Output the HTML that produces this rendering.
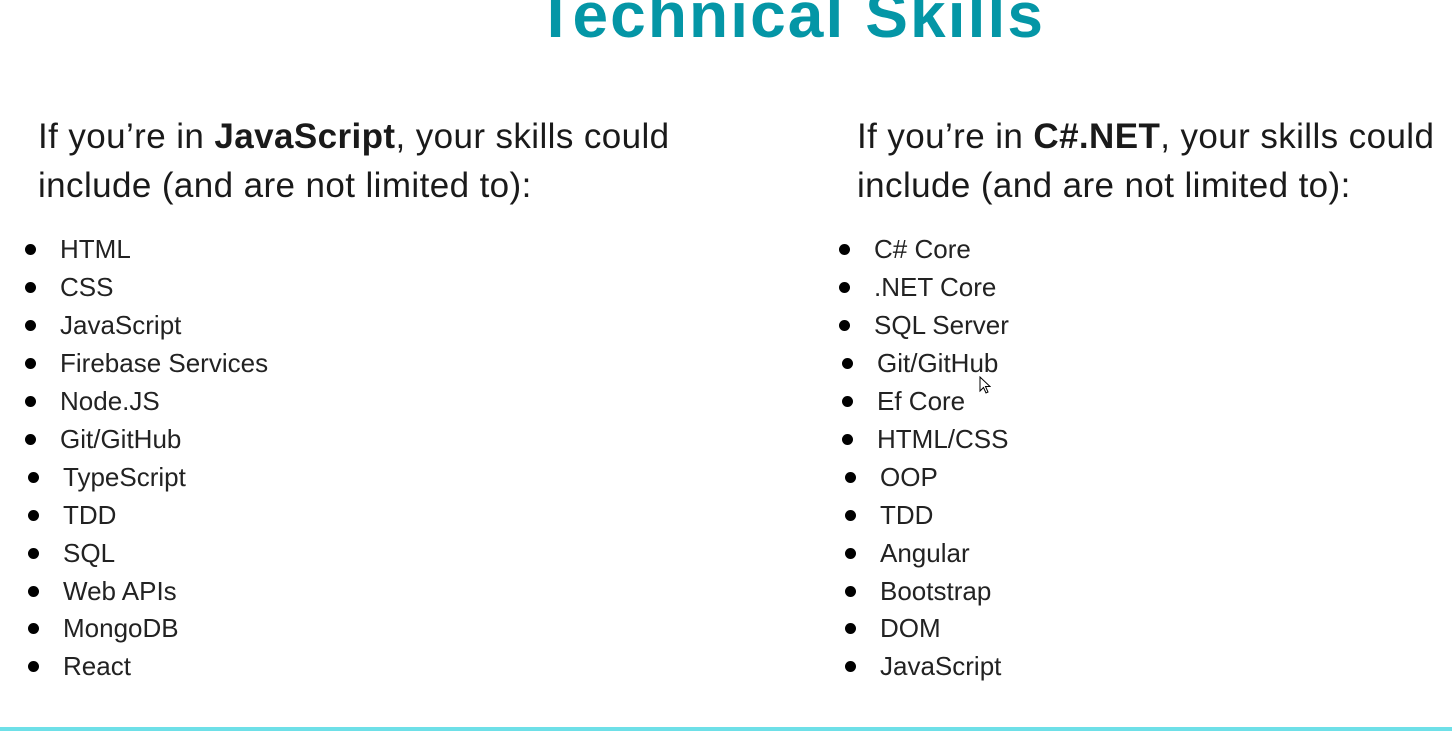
<!DOCTYPE html>
<html><head><style>
body{margin:0;width:1452px;height:731px;background:#fff;position:relative;overflow:hidden;font-family:"Liberation Sans",sans-serif;color:#111}
.t{position:absolute;left:536px;top:-22px;font-size:64px;font-weight:bold;color:#0496a6;letter-spacing:2.1px;white-space:nowrap}
.p{position:absolute;font-size:35px;line-height:49px;letter-spacing:0.4px;white-space:nowrap;color:#1a1a1a}
.i{position:absolute;font-size:26px;line-height:30px;white-space:nowrap;color:#222}
.b{position:absolute;width:11px;height:11px;border-radius:50%;background:#000}
.line{position:absolute;left:0;top:727px;width:1452px;height:4px;background:#6ee0e8}
</style></head><body>
<div class="t">Technical Skills</div>
<div class="p" style="left:38px;top:112px">If you’re in <b>JavaScript</b>, your skills could<br>include (and are not limited to):</div>
<div class="p" style="left:857px;top:112px">If you’re in <b>C#.NET</b>, your skills could<br>include (and are not limited to):</div>

<div class="b" style="left:25px;top:244px"></div><div class="i" style="left:60px;top:234px">HTML</div>
<div class="b" style="left:25px;top:282px"></div><div class="i" style="left:60px;top:272px">CSS</div>
<div class="b" style="left:25px;top:320px"></div><div class="i" style="left:60px;top:310px">JavaScript</div>
<div class="b" style="left:25px;top:358px"></div><div class="i" style="left:60px;top:348px">Firebase Services</div>
<div class="b" style="left:25px;top:396px"></div><div class="i" style="left:60px;top:386px">Node.JS</div>
<div class="b" style="left:25px;top:434px"></div><div class="i" style="left:60px;top:424px">Git/GitHub</div>
<div class="b" style="left:28px;top:472px"></div><div class="i" style="left:63px;top:462px">TypeScript</div>
<div class="b" style="left:28px;top:510px"></div><div class="i" style="left:63px;top:500px">TDD</div>
<div class="b" style="left:28px;top:548px"></div><div class="i" style="left:63px;top:538px">SQL</div>
<div class="b" style="left:28px;top:586px"></div><div class="i" style="left:63px;top:576px">Web APIs</div>
<div class="b" style="left:28px;top:623px"></div><div class="i" style="left:63px;top:613px">MongoDB</div>
<div class="b" style="left:28px;top:661px"></div><div class="i" style="left:63px;top:651px">React</div>

<div class="b" style="left:839px;top:244px"></div><div class="i" style="left:874px;top:234px">C# Core</div>
<div class="b" style="left:839px;top:282px"></div><div class="i" style="left:874px;top:272px">.NET Core</div>
<div class="b" style="left:839px;top:320px"></div><div class="i" style="left:874px;top:310px">SQL Server</div>
<div class="b" style="left:842px;top:358px"></div><div class="i" style="left:877px;top:348px">Git/GitHub</div>
<div class="b" style="left:842px;top:396px"></div><div class="i" style="left:877px;top:386px">Ef Core</div>
<div class="b" style="left:842px;top:434px"></div><div class="i" style="left:877px;top:424px">HTML/CSS</div>
<div class="b" style="left:845px;top:472px"></div><div class="i" style="left:880px;top:462px">OOP</div>
<div class="b" style="left:845px;top:510px"></div><div class="i" style="left:880px;top:500px">TDD</div>
<div class="b" style="left:845px;top:548px"></div><div class="i" style="left:880px;top:538px">Angular</div>
<div class="b" style="left:845px;top:586px"></div><div class="i" style="left:880px;top:576px">Bootstrap</div>
<div class="b" style="left:845px;top:623px"></div><div class="i" style="left:880px;top:613px">DOM</div>
<div class="b" style="left:845px;top:661px"></div><div class="i" style="left:880px;top:651px">JavaScript</div>

<svg style="position:absolute;left:979px;top:376px" width="12" height="20" viewBox="0 0 12 20"><path d="M1 1 L1 15 L4.5 11.5 L7 17 L9 16 L6.5 10.5 L11 10.5 Z" fill="#fff" stroke="#000" stroke-width="1"/></svg>
<div class="line"></div>
</body></html>
